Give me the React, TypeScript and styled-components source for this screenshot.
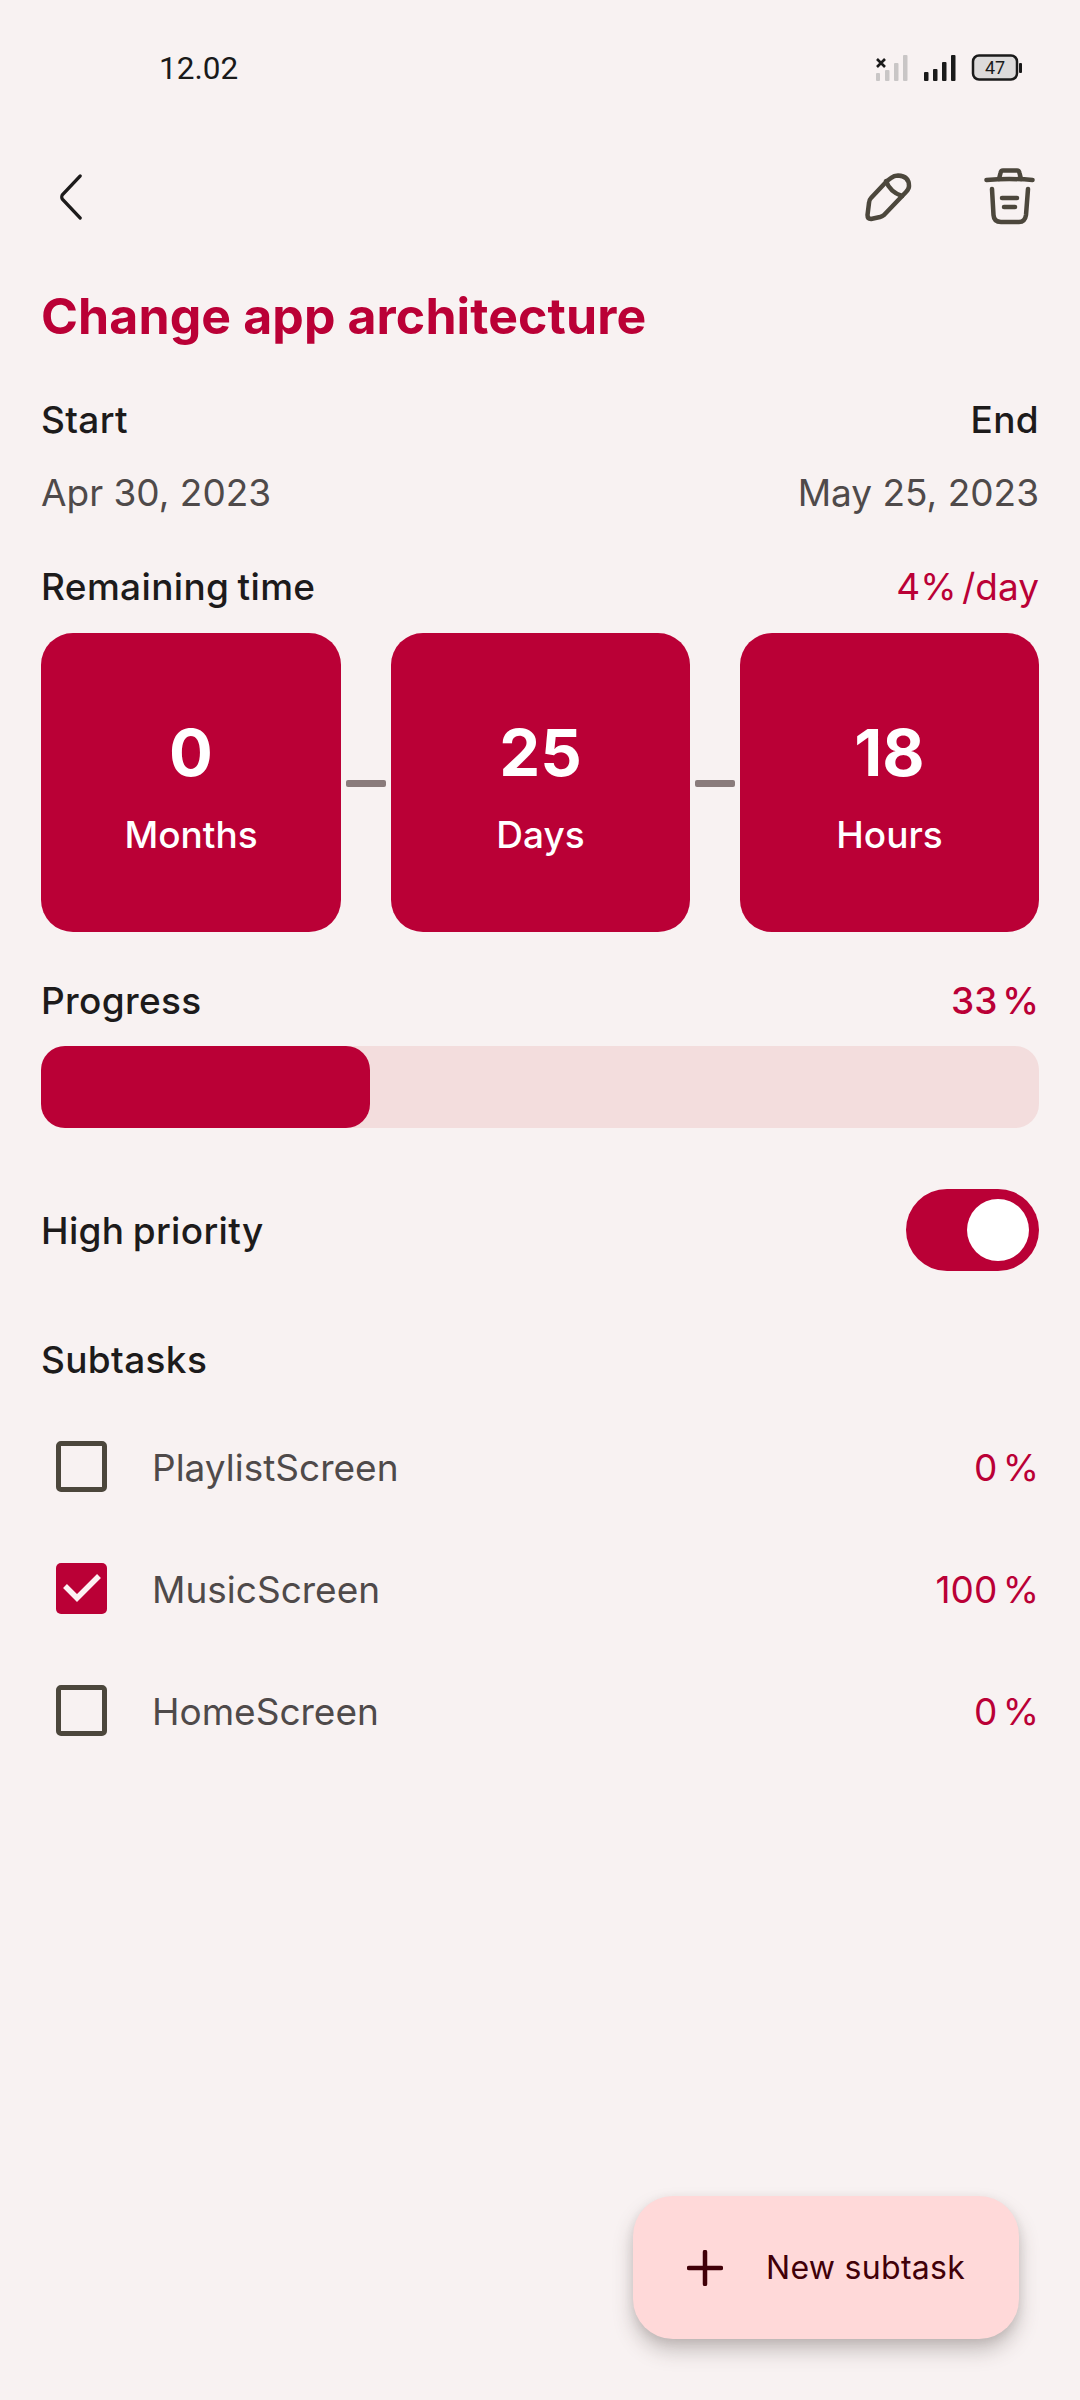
import { Fragment } from "react";
import styled, { createGlobalStyle } from "styled-components";

const GlobalStyle = createGlobalStyle`
  html, body {
    margin: 0;
    padding: 0;
    background: #f8f2f2;
  }
  * {
    box-sizing: border-box;
  }
`;

const Screen = styled.div`
  position: relative;
  width: 1080px;
  height: 2400px;
  overflow: hidden;
  background: #f8f2f2;
  font-family: Inter, "Noto Sans", sans-serif;
  color: #1d1b1b;
`;

const StatusBar = styled.div`
  height: 136px;
  padding: 0 58px 0 159px;
  display: flex;
  align-items: center;
  justify-content: space-between;
  font-family: Roboto, sans-serif;
  font-size: 31.5px;
  color: #1a1a1a;
`;

const Toolbar = styled.div`
  height: 122px;
  padding: 0 43px 0 59px;
  display: flex;
  align-items: center;
  justify-content: space-between;
`;

const ToolbarActions = styled.div`
  display: flex;
  align-items: center;
  gap: 71px;
`;

const Content = styled.div`
  padding: 0 41px;
`;

const Title = styled.h1`
  margin: 28px 0 0;
  font-size: 50px;
  line-height: 60px;
  font-weight: 700;
  letter-spacing: 0.1px;
  color: #ba0036;
`;

const SpacedRow = styled.div<{ $top: number }>`
  margin-top: ${(p) => p.$top}px;
  display: flex;
  align-items: center;
  justify-content: space-between;
  font-size: 37px;
  line-height: 44px;
`;

const Label = styled.span`
  font-weight: 500;
  letter-spacing: 0.35px;
  word-spacing: -2px;
`;

const PriorityLabel = styled(Label)`
  margin-top: 2px;
`;

const DateText = styled.span`
  color: #4f4a4a;
`;

const Accent = styled.span<{ $bold?: boolean }>`
  color: #ba0036;
  font-weight: ${(p) => (p.$bold ? 500 : 400)};
  word-spacing: -5px;
`;

const TimeRow = styled.div`
  margin-top: 24px;
  display: flex;
  align-items: center;
`;

const TimeCard = styled.div`
  flex: 0 0 299px;
  height: 299px;
  padding-top: 4px;
  border-radius: 32px;
  background: #ba0036;
  color: #fff;
  display: flex;
  flex-direction: column;
  align-items: center;
  justify-content: center;
  gap: 20px;

  &:first-child {
    flex-basis: 300px;
  }
`;

const TimeValue = styled.div`
  font-size: 65px;
  line-height: 80px;
  font-weight: 700;
`;

const TimeUnit = styled.div`
  font-size: 37px;
  line-height: 44px;
  font-weight: 500;
`;

const Connector = styled.div`
  flex: 0 0 40px;
  height: 7px;
  margin: 2px 5px 0;
  border-radius: 2px;
  background: #8a7b7b;
`;

const ProgressTrack = styled.div`
  margin-top: 23px;
  height: 82px;
  border-radius: 24px;
  background: #f3dddd;
`;

const ProgressFill = styled.div`
  height: 100%;
  border-radius: 24px;
  background: #ba0036;
`;

const Toggle = styled.div`
  width: 133px;
  height: 82px;
  padding: 0 10px;
  border-radius: 41px;
  background: #ba0036;
  display: flex;
  align-items: center;
  justify-content: flex-end;
`;

const ToggleKnob = styled.div`
  width: 62px;
  height: 62px;
  border-radius: 50%;
  background: #fff;
`;

const TaskList = styled.div`
  margin-top: 24px;
`;

const TaskRow = styled.div`
  height: 122px;
  display: flex;
  align-items: center;
  padding-left: 15px;
  font-size: 37px;
`;

const Checkbox = styled.div<{ $checked?: boolean }>`
  width: 51px;
  height: 51px;
  margin-top: -2px;
  border-radius: 5px;
  border: ${(p) => (p.$checked ? "none" : "5px solid #4c473c")};
  background: ${(p) => (p.$checked ? "#ba0036" : "transparent")};
  display: flex;
  align-items: center;
  justify-content: center;
`;

const TaskName = styled.span`
  margin-left: 45px;
  flex: 1;
  color: #4f4a4a;
`;

const Fab = styled.div`
  position: absolute;
  left: 633px;
  top: 2196px;
  width: 386px;
  height: 143px;
  padding-left: 54px;
  border-radius: 40px;
  background: #ffd9d9;
  color: #410008;
  display: flex;
  align-items: center;
  gap: 43px;
  font-size: 32px;
  letter-spacing: 0.3px;
  box-shadow: 0 12px 20px rgba(60, 50, 45, 0.26), 0 3px 10px rgba(60, 50, 45, 0.1);
`;

const BackIcon = () => (
  <svg width="26" height="46" viewBox="0 0 26 46" fill="none">
    <path
      d="M23 2 L3.500 21 Q2.500 23 3.500 25 L23 44"
      stroke="#1d1b1b"
      strokeWidth="3.500"
      strokeLinecap="round"
      strokeLinejoin="round"
      transform="matrix(.92 0 0 1 0 0)"
    />
  </svg>
);

const PencilIcon = () => (
  <svg width="48" height="50" viewBox="-2 -2 48 50" fill="none" stroke="#4c473c" strokeWidth="4.500" strokeLinecap="round" strokeLinejoin="round">
    <path d="M21 7 L5 24 Q3 26 3 29 L1.500 41 Q1.500 45 5 45 L14 43 Q16 42.500 18 41 L40 18 Q43 15 43 12 Q43 2 32 1.500 Q28 1.500 25 4 Z" />
    <path d="M20 7 Q24 18 36 22" />
  </svg>
);

const TrashIcon = () => (
  <svg width="54" height="58" viewBox="-2 -2 54 58" fill="none" stroke="#4c473c" strokeWidth="4.500" strokeLinecap="round" strokeLinejoin="round">
    <path d="M1.500 10 Q24 8 47.500 10" />
    <path d="M14 9 L15.500 3 Q16 .5 18 .5 H32 Q34 .5 34.500 3 L36 9" />
    <path d="M7 19 L8.500 45 Q9 52 16 52 H34 Q40 52 41 45 L43 19" />
    <path d="M17 28 H32" />
    <path d="M19 37 H30" />
  </svg>
);

const CheckIcon = () => (
  <svg width="38" height="28" viewBox="0 0 38 28" fill="none">
    <path d="M2 12 L14 24 L36 2" stroke="#fdf2f4" strokeWidth="5.500" />
  </svg>
);

const PlusIcon = () => (
  <svg width="36" height="36" viewBox="0 0 36 36" fill="none">
    <path d="M18 2 V34 M2 18 H34" stroke="#410008" strokeWidth="4.500" strokeLinecap="round" />
  </svg>
);

const StatusIcons = () => (
  <svg width="146" height="30" viewBox="0 0 146 30">
    <g fill="#c9c6c6">
      <rect x="0" y="20" width="4" height="8" rx="1" />
      <rect x="9" y="17" width="4.500" height="11" rx="1" />
      <rect x="18" y="10" width="4.500" height="18" rx="1" />
      <rect x="27" y="2" width="4.500" height="26" rx="1" />
    </g>
    <path d="M1 6 L9 14 M9 6 L1 14" stroke="#1a1a1a" strokeWidth="2.600" />
    <g fill="#1a1a1a">
      <rect x="48" y="19" width="4.500" height="9" rx="1" />
      <rect x="57" y="16" width="4.500" height="12" rx="1" />
      <rect x="66" y="9" width="4.500" height="19" rx="1" />
      <rect x="75" y="2" width="4.500" height="26" rx="1" />
      <rect x="143" y="10" width="3" height="10" rx="1" />
    </g>
    <rect x="97" y="2.500" width="44" height="24" rx="6" fill="#dcdada" stroke="#1a1a1a" strokeWidth="2.500" />
    <text x="119" y="21" textAnchor="middle" fontFamily="Roboto, sans-serif" fontSize="18" fill="#1a1a1a">
      47
    </text>
  </svg>
);

const timeParts = [
  { value: "0", unit: "Months" },
  { value: "25", unit: "Days" },
  { value: "18", unit: "Hours" },
];

const subtasks = [
  { name: "PlaylistScreen", percent: 0 },
  { name: "MusicScreen", percent: 100 },
  { name: "HomeScreen", percent: 0 },
];

const App = () => {
  const progress = 33;

  return (
    <>
      <GlobalStyle />
      <Screen>
        <StatusBar>
          <span>12.02</span>
          <StatusIcons />
        </StatusBar>
        <Toolbar>
          <BackIcon />
          <ToolbarActions>
            <PencilIcon />
            <TrashIcon />
          </ToolbarActions>
        </Toolbar>
        <Content>
          <Title>Change app architecture</Title>
          <SpacedRow $top={52}>
            <Label>Start</Label>
            <Label>End</Label>
          </SpacedRow>
          <SpacedRow $top={29}>
            <DateText>Apr 30, 2023</DateText>
            <DateText>May 25, 2023</DateText>
          </SpacedRow>
          <SpacedRow $top={50}>
            <Label>Remaining time</Label>
            <Accent>4% /day</Accent>
          </SpacedRow>
          <TimeRow>
            {timeParts.map((part, index) => (
              <Fragment key={part.unit}>
                {index > 0 && <Connector />}
                <TimeCard>
                  <TimeValue>{part.value}</TimeValue>
                  <TimeUnit>{part.unit}</TimeUnit>
                </TimeCard>
              </Fragment>
            ))}
          </TimeRow>
          <SpacedRow $top={47}>
            <Label>Progress</Label>
            <Accent $bold>{progress} %</Accent>
          </SpacedRow>
          <ProgressTrack>
            <ProgressFill style={{ width: `${progress}%` }} />
          </ProgressTrack>
          <SpacedRow $top={61}>
            <PriorityLabel>High priority</PriorityLabel>
            <Toggle>
              <ToggleKnob />
            </Toggle>
          </SpacedRow>
          <SpacedRow $top={67}>
            <Label>Subtasks</Label>
          </SpacedRow>
          <TaskList>
            {subtasks.map((task) => (
              <TaskRow key={task.name}>
                <Checkbox $checked={task.percent === 100}>
                  {task.percent === 100 && <CheckIcon />}
                </Checkbox>
                <TaskName>{task.name}</TaskName>
                <Accent>{task.percent} %</Accent>
              </TaskRow>
            ))}
          </TaskList>
        </Content>
        <Fab>
          <PlusIcon />
          <span>New subtask</span>
        </Fab>
      </Screen>
    </>
  );
};

export default App;
